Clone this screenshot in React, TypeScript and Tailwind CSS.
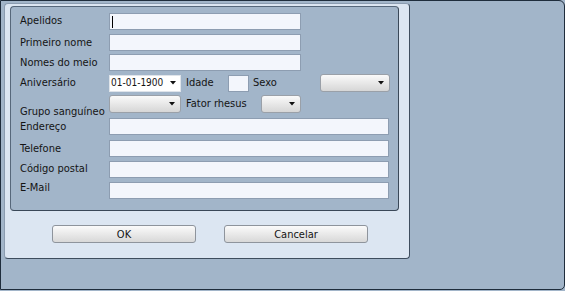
import React from "react";

function Arrow() {
  return (
    <svg width="6" height="4" viewBox="0 0 6 4" className="shrink-0">
      <path d="M0 0 H6 L3 3.5 Z" fill="#111" />
    </svg>
  );
}

function TextInput({ w, caret }: { w: string; caret?: boolean }) {
  return (
    <div className={`${w} h-[17px] bg-[#f3f6fc] border border-[#8d9db1] flex items-center pl-[2px]`}>
      {caret ? <div className="w-px h-[12px] bg-black" /> : null}
    </div>
  );
}

function Dropdown({ w }: { w: string }) {
  return (
    <div
      className={`${w} h-[18px] rounded-[3px] border border-[#9aa0a8] bg-gradient-to-b from-[#fafafa] to-[#d6d6d6] flex items-center justify-end pr-[5px]`}
    >
      <Arrow />
    </div>
  );
}

function Label({ text, w = "w-[89px]", extra = "" }: { text: string; w?: string; extra?: string }) {
  return <div className={`${w} shrink-0 ${extra}`}>{text}</div>;
}

export default function App() {
  return (
    <div className="w-[565px] h-[291px] bg-[#a2b5c9] font-['DejaVu_Sans_Condensed','DejaVu_Sans',sans-serif] text-[11px] text-[#141414] leading-none">
      <div className="w-[565px] h-[290px] border border-[#1f2d3c] rounded-tr-[6px] rounded-br-[5px] pt-[2px] pl-[3px]">
        <div className="w-[406px] h-[256px] bg-[#dce6f2] border border-[#8b9cb0] border-r-[#3e4d5e] border-b-[#3e4d5e] rounded-[4px] pt-[2px] pl-[5px]">
          <div className="w-[389px] h-[205px] bg-[#a2b5c9] border border-[#56677a] border-r-[#3a4858] border-b-[#3a4858] rounded-[4px] pl-[9px] pt-[6px] flex flex-col">
            <div className="flex items-center h-[17px]">
              <Label text="Apelidos" extra="-mt-[2px]" />
              <TextInput w="w-[192px]" caret />
            </div>
            <div className="flex items-center h-[17px] mt-[4px]">
              <Label text="Primeiro nome" />
              <TextInput w="w-[192px]" />
            </div>
            <div className="flex items-center h-[17px] mt-[3px]">
              <Label text="Nomes do meio" />
              <TextInput w="w-[192px]" />
            </div>
            <div className="flex items-center h-[18px] mt-[3px]">
              <Label text="Aniversário" extra="-mt-[2px]" />
              <div className="w-[72px] h-[17px] bg-white border border-[#dfe4ea] flex items-center justify-between pl-[1px] pr-[4px] text-[10px]">
                <span>01-01-1900</span>
                <Arrow />
              </div>
              <div className="ml-[5px] w-[42px] -mt-[2px]">Idade</div>
              <div className="w-[21px] h-[17px] bg-[#f3f6fc] border border-[#8d9db1]" />
              <div className="ml-[4px] w-[67px] -mt-[2px]">Sexo</div>
              <Dropdown w="w-[70px]" />
            </div>
            <div className="flex h-[18px] mt-[3px]">
              <Label text="Grupo sanguíneo" extra="self-end -mb-[4px]" />
              <Dropdown w="w-[72px]" />
              <div className="ml-[5px] w-[75px] self-center -mt-[2px]">Fator rhesus</div>
              <Dropdown w="w-[40px]" />
            </div>
            <div className="flex items-center h-[17px] mt-[5px]">
              <Label text="Endereço" />
              <TextInput w="w-[280px]" />
            </div>
            <div className="flex items-center h-[17px] mt-[5px]">
              <Label text="Telefone" />
              <TextInput w="w-[280px]" />
            </div>
            <div className="flex items-center h-[17px] mt-[4px]">
              <Label text="Código postal" extra="-mt-[2px]" />
              <TextInput w="w-[280px]" />
            </div>
            <div className="flex items-center h-[17px] mt-[4px]">
              <Label text="E-Mail" extra="-mt-[6px]" />
              <TextInput w="w-[280px]" />
            </div>
          </div>
          <div className="flex mt-[14px] pl-[42px] gap-[28px]">
            <div className="w-[144px] h-[18px] rounded-[3px] border border-[#8e949c] bg-gradient-to-b from-[#fbfbfb] to-[#d8d8d8] flex items-center justify-center">
              OK
            </div>
            <div className="w-[144px] h-[18px] rounded-[3px] border border-[#8e949c] bg-gradient-to-b from-[#fbfbfb] to-[#d8d8d8] flex items-center justify-center">
              Cancelar
            </div>
          </div>
        </div>
      </div>
    </div>
  );
}
